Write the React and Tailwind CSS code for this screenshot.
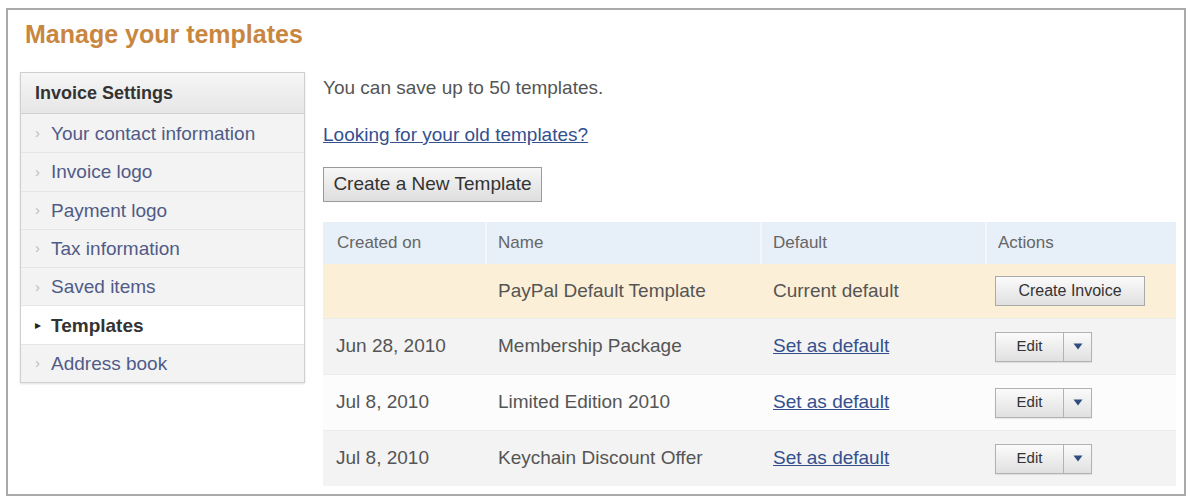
import React from 'react';

const menu = [
  'Your contact information',
  'Invoice logo',
  'Payment logo',
  'Tax information',
  'Saved items',
  'Templates',
  'Address book',
];

const templates = [
  { date: 'Jun 28, 2010', name: 'Membership Package', bg: 'bg-[#f3f3f3]' },
  { date: 'Jul 8, 2010', name: 'Limited Edition 2010', bg: 'bg-[#fcfcfc]' },
  { date: 'Jul 8, 2010', name: 'Keychain Discount Offer', bg: 'bg-[#f3f3f3]' },
];

function EditButton() {
  return (
    <div className="flex h-[30px] w-[97px] border border-[#b2b2b2] bg-linear-to-b from-[#fbfbfb] to-[#e0e0e0] shadow-[0_1px_1px_rgba(0,0,0,0.08)]">
      <span className="flex w-[68px] items-center justify-center border-r border-[#b2b2b2] text-[15px] text-[#333]">Edit</span>
      <span className="flex flex-1 items-center justify-center">
        <svg width="10" height="7" viewBox="0 0 10 7">
          <path d="M0.5 0.5 L9.5 0.5 L5 6.5 Z" fill="#2f4c7e" />
        </svg>
      </span>
    </div>
  );
}

export default function App() {
  return (
    <div className="min-h-[498px] bg-white pt-[8px] pl-[6px] font-['Liberation_Sans',Arial,sans-serif]">
      <div className="h-[488px] w-[1180px] border-2 border-[#a9a9a9]">
        <h1 className="ml-[17px] mt-[10px] text-[25px] font-bold leading-[28px] text-[#c98640]">Manage your templates</h1>

        <div className="mt-[24px] flex">
          {/* sidebar */}
          <div className="ml-[12px] w-[285px] self-start border border-[#cfcfcf] bg-[#f3f3f3] shadow-[0_1px_2px_rgba(0,0,0,0.12)]">
            <div className="flex h-[41px] items-center border-b border-[#d2d2d2] bg-linear-to-b from-[#f6f6f6] to-[#e6e6e6] pl-[14px] text-[18px] font-bold text-[#333]">
              Invoice Settings
            </div>
            {menu.map((item, i) => {
              const active = item === 'Templates';
              return (
                <div
                  key={item}
                  className={`flex h-[38.3px] items-center pl-[14px] ${i > 0 ? 'border-t border-[#e6e6e6]' : ''} ${active ? 'bg-white' : ''}`}
                >
                  {active ? (
                    <span className="w-[16px] text-[12px] text-[#222]">▸</span>
                  ) : (
                    <span className="w-[16px] text-[15px] text-[#bdbdbd]">›</span>
                  )}
                  <span className={`text-[19px] leading-none ${active ? 'font-bold text-[#333]' : 'text-[#505b87]'}`}>{item}</span>
                </div>
              );
            })}
          </div>

          {/* content */}
          <div className="ml-[18px] flex flex-col items-start">
            <p className="mt-[4px] text-[19px] leading-[24px] text-[#555]">You can save up to 50 templates.</p>
            <a href="#" className="mt-[23px] text-[19px] leading-[24px] text-[#34508f] underline">Looking for your old templates?</a>
            <button className="mt-[20px] h-[35px] w-[219px] border border-[#9a9a9a] bg-linear-to-b from-[#f7f7f7] to-[#dedede] text-[19px] text-[#333]">
              Create a New Template
            </button>

            <div className="mt-[20px] w-[853px] text-[19px] text-[#555]">
              <div className="grid h-[42px] grid-cols-[162px_275px_225px_191px] bg-[#e7eff9] text-[17px] text-[#666]">
                <div className="flex items-center pl-[14px]">Created on</div>
                <div className="flex items-center border-l-2 border-[#f3f7fc] pl-[11px]">Name</div>
                <div className="flex items-center border-l-2 border-[#f3f7fc] pl-[11px]">Default</div>
                <div className="flex items-center border-l-2 border-[#f3f7fc] pl-[11px]">Actions</div>
              </div>

              <div className="grid h-[54px] grid-cols-[162px_275px_225px_191px] bg-[#fcefd7]">
                <div />
                <div className="flex items-center pl-[13px]">PayPal Default Template</div>
                <div className="flex items-center pl-[13px]">Current default</div>
                <div className="flex items-center pl-[10px]">
                  <button className="h-[30px] w-[150px] border border-[#a9a9a9] bg-linear-to-b from-[#fbfbfb] to-[#e0e0e0] text-[16px] text-[#333]">
                    Create Invoice
                  </button>
                </div>
              </div>

              {templates.map((t, i) => (
                <div key={i} className={`grid h-[56px] grid-cols-[162px_275px_225px_191px] border-t border-[#ececec] ${t.bg}`}>
                  <div className="flex items-center pl-[13px]">{t.date}</div>
                  <div className="flex items-center pl-[13px]">{t.name}</div>
                  <div className="flex items-center pl-[13px]">
                    <a href="#" className="text-[#34508f] underline">Set as default</a>
                  </div>
                  <div className="flex items-center pl-[10px]">
                    <EditButton />
                  </div>
                </div>
              ))}
            </div>
          </div>
        </div>
      </div>
    </div>
  );
}
